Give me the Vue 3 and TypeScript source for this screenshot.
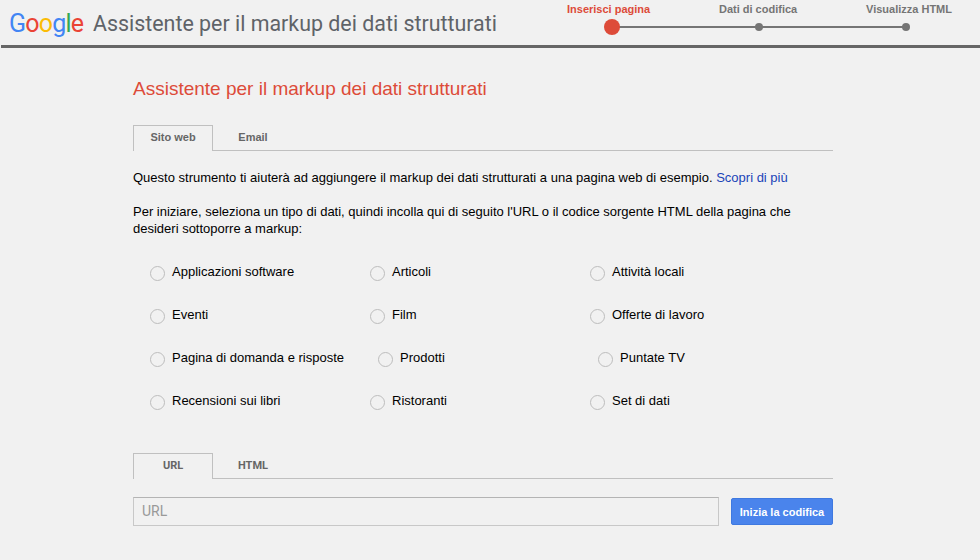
<template>
  <div class="page">
    <header class="topbar">
      <div class="brand">
        <span class="logo" aria-label="Google">
          <span class="blue">G</span><span class="red">o</span><span class="yellow">o</span><span class="blue">g</span><span class="green">l</span><span class="red">e</span>
        </span>
        <span class="product">Assistente per il markup dei dati strutturati</span>
      </div>
      <div class="stepper">
        <div class="step-labels">
          <span
            v-for="(step, i) in steps"
            :key="step"
            class="step-label"
            :class="{ active: i === 0 }"
            >{{ step }}</span
          >
        </div>
        <div class="track">
          <span
            v-for="(step, i) in steps"
            :key="step"
            class="dot"
            :class="{ active: i === 0 }"
          ></span>
        </div>
      </div>
    </header>

    <main class="content">
      <h1 class="title">Assistente per il markup dei dati strutturati</h1>

      <div class="tabs">
        <button class="tab selected">Sito web</button>
        <button class="tab">Email</button>
      </div>

      <p class="intro">
        Questo strumento ti aiuterà ad aggiungere il markup dei dati strutturati a una pagina web di
        esempio. <a href="#" class="more">Scopri di più</a>
      </p>
      <p class="lead">
        Per iniziare, seleziona un tipo di dati, quindi incolla qui di seguito l'URL o il codice
        sorgente HTML della pagina che desideri sottoporre a markup:
      </p>

      <div class="types">
        <div v-for="(row, r) in dataTypes" :key="r" class="type-row">
          <label v-for="item in row" :key="item" class="type">
            <span class="radio"></span>
            <span class="type-name">{{ item }}</span>
          </label>
        </div>
      </div>

      <div class="tabs source-tabs">
        <button class="tab selected">URL</button>
        <button class="tab">HTML</button>
      </div>

      <div class="url-form">
        <input class="url-input" type="text" placeholder="URL" />
        <button class="start">Inizia la codifica</button>
      </div>
    </main>
  </div>
</template>

<script setup lang="ts">
const steps: string[] = ["Inserisci pagina", "Dati di codifica", "Visualizza HTML"];

const dataTypes: string[][] = [
  ["Applicazioni software", "Articoli", "Attività locali"],
  ["Eventi", "Film", "Offerte di lavoro"],
  ["Pagina di domanda e risposte", "Prodotti", "Puntate TV"],
  ["Recensioni sui libri", "Ristoranti", "Set di dati"],
];
</script>

<style scoped>
.page {
  min-height: 560px;
  background: #f1f1f1;
  font-family: "Liberation Sans", Arial, sans-serif;
  color: #000;
  overflow: hidden;
}

.topbar {
  display: flex;
  justify-content: space-between;
  height: 45px;
  margin-left: 1px;
  border-bottom: 3px solid #666;
}

.brand {
  display: flex;
  align-items: center;
  gap: 10px;
  padding-left: 8px;
  height: 46px;
}

.logo {
  font-family: Roboto, sans-serif;
  font-size: 25px;
  letter-spacing: -0.8px;
  width: 74px;
  white-space: nowrap;
}

.blue { color: #4285f4; }
.red { color: #ea4335; }
.yellow { color: #fbbc05; }
.green { color: #34a853; }

.product {
  font-family: Roboto, sans-serif;
  font-size: 21.4px;
  color: #5f6368;
  white-space: nowrap;
}

.stepper {
  width: 413px;
  padding-top: 3px;
}

.step-labels {
  display: flex;
  justify-content: space-between;
  padding-right: 28px;
}

.step-label {
  font-size: 11px;
  font-weight: 700;
  line-height: 13px;
  color: #757575;
}

.step-label.active {
  color: #dd4b39;
}

.track {
  position: relative;
  display: flex;
  justify-content: space-between;
  align-items: center;
  width: 302px;
  height: 16px;
  margin: 3px 0 0 41px;
}

.track::before {
  content: "";
  position: absolute;
  left: 4px;
  right: 4px;
  top: 7px;
  height: 2px;
  background: #757575;
}

.dot {
  position: relative;
  width: 8px;
  height: 8px;
  border-radius: 50%;
  background: #757575;
}

.dot.active {
  width: 16px;
  height: 16px;
  margin: 0 -4px;
  background: #dd4b39;
}

.content {
  width: 700px;
  margin-left: 133px;
}

.title {
  margin: 30px 0 0;
  font-size: 19px;
  font-weight: 400;
  line-height: 22px;
  color: #dd4b39;
}

.tabs {
  display: flex;
  height: 26px;
  margin-top: 25px;
  border-bottom: 1px solid #c0c0c0;
  box-sizing: border-box;
}

.tab {
  width: 80px;
  height: 26px;
  padding: 0 0 3px;
  border: 1px solid transparent;
  border-bottom: 0;
  background: none;
  font: 700 11px "Liberation Sans", Arial, sans-serif;
  color: #666;
}

.tab.selected {
  border-color: #c0c0c0;
  background: #f1f1f1;
}

.intro {
  margin: 18px 0 0;
  font-size: 13px;
  line-height: 17px;
}

.more {
  color: #1a44b8;
  text-decoration: none;
}

.lead {
  margin: 17px 0 0;
  font-size: 13px;
  line-height: 17px;
}

.types {
  margin-top: 19px;
}

.type-row {
  display: flex;
  height: 43px;
  align-items: flex-start;
}

.type {
  display: flex;
  gap: 7px;
  box-sizing: border-box;
  min-width: 220px;
  padding: 8px 17px 0;
  font-size: 13px;
  line-height: 16px;
  white-space: nowrap;
}

.radio {
  width: 15px;
  height: 15px;
  margin-top: 2px;
  box-sizing: border-box;
  border: 1px solid #bdbdbd;
  border-radius: 50%;
}

.source-tabs {
  margin-top: 25px;
}

.source-tabs .tab {
  font-family: Roboto, sans-serif;
}

.url-form {
  display: flex;
  justify-content: space-between;
  align-items: center;
  margin-top: 18px;
}

.url-input {
  width: 586px;
  height: 29px;
  box-sizing: border-box;
  padding: 0 8px 2px;
  border: 1px solid #c8c8c8;
  border-top-color: #b4b4b4;
  background: #f1f1f1;
  font-family: Roboto, sans-serif;
  font-size: 14px;
  outline: none;
}

.url-input::placeholder {
  color: #999;
  opacity: 1;
}

.start {
  width: 102px;
  height: 27px;
  padding: 0;
  border: 1px solid #3f79e0;
  border-radius: 2px;
  background: #4a84ec;
  color: #fff;
  font: 700 11px "Liberation Sans", Arial, sans-serif;
}
</style>

<style>
html,
body {
  background: #f1f1f1;
}
</style>
